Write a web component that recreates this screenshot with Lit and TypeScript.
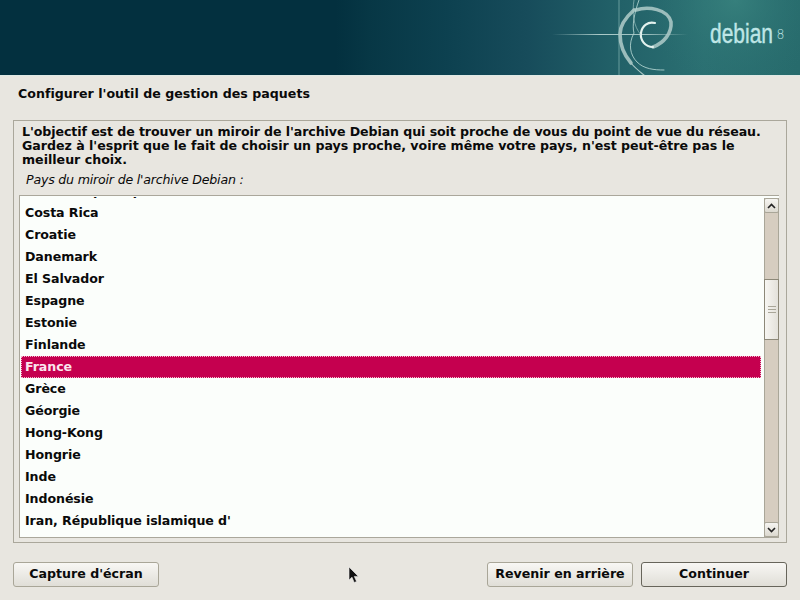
import { LitElement, html, css, svg } from "lit";
import { customElement } from "lit/decorators.js";

const ITEMS = ["Corée, République de","Costa Rica","Croatie","Danemark","El Salvador","Espagne","Estonie","Finlande","France","Grèce","Géorgie","Hong-Kong","Hongrie","Inde","Indonésie","Iran, République islamique d'","Iraq"];

@customElement("app-root")
export class AppRoot extends LitElement {
  static styles = css`
    :host { display: block; width: 800px; height: 600px; overflow: hidden; position: relative; background: #e8e6e0; font-family: "DejaVu Sans", sans-serif; font-size: 12.6px; color: #0a0a0a; }
    .header { display: block; width: 800px; height: 75px; }
    .rule { height: 1px; background: #dfe9e5; }
    .page { display: flex; flex-direction: column; height: 524px; padding: 0 13px; box-sizing: border-box; }
    .title { font-weight: bold; height: 44px; padding: 10px 0 0 5px; box-sizing: border-box; line-height: 15px; letter-spacing: 0.02px; }
    .frame { height: 423px; box-sizing: border-box; border: 1px solid #aaa79b; padding: 4px 7px 4px 5px; display: flex; flex-direction: column; }
    .desc { font-weight: bold; line-height: 14px; padding: 0 0 0 3px; white-space: nowrap; }
    .l1 { letter-spacing: -0.085px; }
    .l2 { letter-spacing: -0.02px; }
    .label { font-style: italic; line-height: 15px; padding: 5px 0 0 7px; height: 28px; box-sizing: border-box; letter-spacing: -0.2px; }
    .listbox { flex: 1; min-height: 0; display: flex; border: 1px solid #aaa79b; border-right: 0; background: #fbfefb; padding: 1px 0 0 1px; overflow: hidden; }
    .list { flex: 1; overflow: hidden; min-width: 0; margin-bottom: 1px; }
    .rows { margin-top: -17px; }
    .row { height: 22px; line-height: 22px; font-weight: bold; padding-left: 4px; box-sizing: border-box; white-space: nowrap; letter-spacing: -0.08px; }
    .row.sel { background: #c5004f; color: #fbe6ee; outline: 1px dotted #f3b5cc; outline-offset: -1px; }
    .scroll { width: 15px; margin: 1px 0 0 3px; display: flex; flex-direction: column; background: #d6cdc0; border: 1px solid #a9a698; border-top: 0; border-bottom: 0; box-sizing: border-box; }
    .sb { height: 15px; flex: none; box-sizing: border-box; background: linear-gradient(#f6f5f1, #dcd9d0); border: 1px solid #a9a698; margin: 0 -1px; border-radius: 2px; display: flex; align-items: center; justify-content: center; }
    .sb svg { display: block; }
    .gap { height: 66px; flex: none; }
    .thumb { height: 61px; flex: none; margin: 0 -1px; border: 1px solid #8c8878; box-sizing: border-box; background: linear-gradient(90deg, #f7f6f2, #e3e1da); display: flex; flex-direction: column; align-items: center; justify-content: center; gap: 2px; }
    .thumb i { display: block; width: 8px; height: 1px; background: #a9a698; }
    .rest { flex: 1; }
    .footer { display: flex; gap: 8px; padding-top: 19px; }
    .btn { width: 146px; height: 25px; box-sizing: border-box; border: 1px solid #a9a698; border-radius: 3px; background: linear-gradient(#f8f7f4, #e0ded7); font: bold 12.6px "DejaVu Sans", sans-serif; color: #0a0a0a; padding: 0 0 2px; display: block; }
    .btn.default { border-color: #67655b; }
    .spacer { flex: 1; }
    .cursor { position: absolute; left: 348px; top: 566px; }
  `;

  private header() {
    return html`<svg class="header" viewBox="0 0 800 75">
      <defs>
        <linearGradient id="h" x1="0" x2="1" y1="0" y2="0">
          <stop offset="0" stop-color="#03303f"/>
          <stop offset=".42" stop-color="#03303f"/>
          <stop offset=".46" stop-color="#073745"/>
          <stop offset=".56" stop-color="#0d4150"/>
          <stop offset=".66" stop-color="#174c5b"/>
          <stop offset=".76" stop-color="#215f67"/>
          <stop offset=".88" stop-color="#2b7072"/>
          <stop offset="1" stop-color="#276b6c"/>
        </linearGradient>
        <radialGradient id="g" gradientUnits="userSpaceOnUse" cx="735" cy="0" r="90">
          <stop offset="0" stop-color="#3a8580" stop-opacity=".75"/>
          <stop offset="1" stop-color="#2b7072" stop-opacity="0"/>
        </radialGradient>
        <linearGradient id="hl" gradientUnits="userSpaceOnUse" x1="552" x2="688" y1="0" y2="0">
          <stop offset="0" stop-color="#cfe6e2" stop-opacity="0"/>
          <stop offset=".35" stop-color="#cfe6e2" stop-opacity=".8"/>
          <stop offset=".7" stop-color="#cfe6e2" stop-opacity=".7"/>
          <stop offset="1" stop-color="#cfe6e2" stop-opacity="0"/>
        </linearGradient>
      </defs>
      <rect width="800" height="75" fill="url(#h)"/>
      <rect width="800" height="75" fill="url(#g)"/>
      ${svg`
      <path d="M552 34.5H688" stroke="url(#hl)" fill="none"/>
      <path d="M619 0V75" stroke="#8fbdb9" stroke-opacity=".65" fill="none"/>
      <g fill="none" stroke-linecap="round">
        <path d="M636 10C648 6 668 9 671 22C672 33 664 43 653 47" stroke="#a9c6c4" stroke-width="3.6" stroke-opacity=".9"/>
        <path d="M653 47C645 47 640 40 641 33C642 26 648 21 655 23" stroke="#e3f2ee" stroke-width="2.2"/>
        <path d="M634 10C625 18 620 26 620 34C620 47 625 56 631 63" stroke="#a9c6c4" stroke-width="3.6" stroke-opacity=".9"/>
        <path d="M631 63C635 68 639 71 644 75" stroke="#a9c6c4" stroke-width="1.2"/>
        <path d="M639 0C634 14 632 26 634 33C628 44 630 55 637 62C644 69 654 70 664 70" stroke="#b4d6d2" stroke-width="1" stroke-opacity=".85"/>
        <path d="M634 0C632 12 633 26 641 35" stroke="#b4d6d2" stroke-width=".8" stroke-opacity=".7"/>
      </g>
      <text x="710" y="43" font-family="Liberation Sans, sans-serif" font-size="27" fill="#bfe6e6" stroke="#bfe6e6" stroke-width=".4" textLength="63" lengthAdjust="spacingAndGlyphs">debian</text>
      <text x="776.5" y="38.5" font-family="DejaVu Sans Light, DejaVu Sans, sans-serif" font-weight="200" font-size="14" fill="#bfe6e6" textLength="8" lengthAdjust="spacingAndGlyphs">8</text>
      `}
    </svg>`;
  }

  render() {
    return html`
      ${this.header()}
      <div class="rule"></div>
      <div class="page">
        <div class="title">Configurer l'outil de gestion des paquets</div>
        <div class="frame">
          <div class="desc"><span class="l1">L'objectif est de trouver un miroir de l'archive Debian qui soit proche de vous du point de vue du réseau.</span><br><span class="l2">Gardez à l'esprit que le fait de choisir un pays proche, voire même votre pays, n'est peut-être pas le</span><br>meilleur choix.</div>
          <div class="label">Pays du miroir de l'archive Debian :</div>
          <div class="listbox">
            <div class="list"><div class="rows">
              ${ITEMS.map((t) => html`<div class="row ${t === "France" ? "sel" : ""}">${t}</div>`)}
            </div></div>
            <div class="scroll">
              <div class="sb"><svg width="9" height="6" viewBox="0 0 9 6"><path d="M1 5L4.5 1.5L8 5" fill="none" stroke="#222" stroke-width="1.6"/></svg></div>
              <div class="gap"></div>
              <div class="thumb"><i></i><i></i><i></i></div>
              <div class="rest"></div>
              <div class="sb"><svg width="9" height="6" viewBox="0 0 9 6"><path d="M1 1L4.5 4.5L8 1" fill="none" stroke="#222" stroke-width="1.6"/></svg></div>
            </div>
          </div>
        </div>
        <div class="footer">
          <button class="btn">Capture d'écran</button>
          <div class="spacer"></div>
          <button class="btn">Revenir en arrière</button>
          <button class="btn default">Continuer</button>
        </div>
      </div>
      <svg class="cursor" width="12" height="18" viewBox="0 0 12 18"><path d="M1 1V14L4 11.2L6.2 16.5L8.6 15.5L6.3 10.4H10.4Z" fill="#111" stroke="#eee" stroke-width=".6"/></svg>
    `;
  }
}
